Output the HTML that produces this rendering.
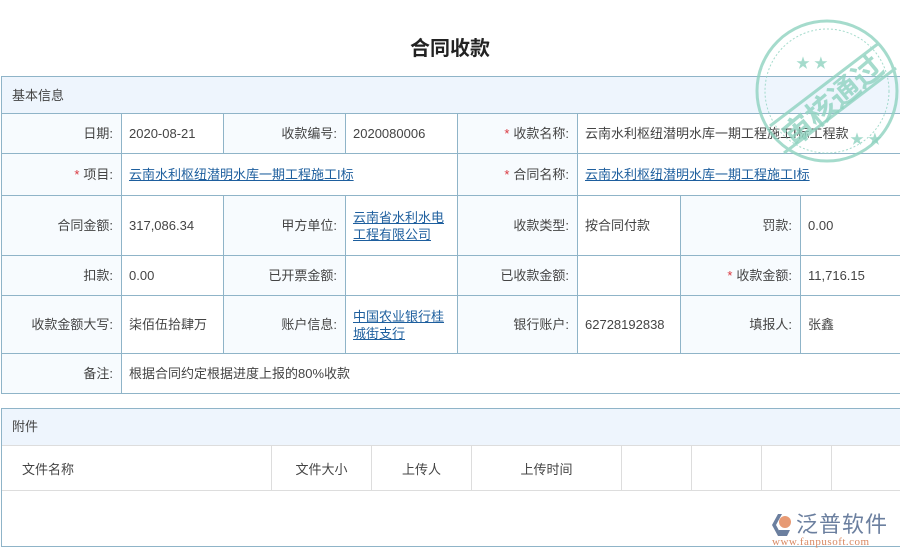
<!DOCTYPE html>
<html><head><meta charset="utf-8"><style>
*{margin:0;padding:0;box-sizing:border-box}
body{width:900px;height:557px;background:#fff;font-family:"Liberation Sans","Noto Sans CJK SC",sans-serif;font-size:13px;color:#444;position:relative;overflow:hidden}
.a{position:absolute}
.title{left:0;width:900px;top:32px;text-align:center;font-size:20px;font-weight:bold;color:#222}
.c{position:absolute;border-right:1px solid #8fb4c8;border-bottom:1px solid #8fb4c8;display:flex;align-items:center;line-height:17px}
.l{background:#f7fbfe;justify-content:flex-end;padding-right:8px}
.v{padding-left:7px;background:#fff}
.lk{color:#1e5f9e;text-decoration:underline}
.s{color:#d9363e;margin-right:4px}
.h{background:#eef5fd}
.g{position:absolute;border-right:1px solid #ddd;display:flex;align-items:center;justify-content:center;top:446px;height:44px}
</style></head><body>
<div class="a title">合同收款</div>
<div class="a" style="left:1px;top:76px;width:900px;height:318px;border:1px solid #8fb4c8;border-right:none"></div>
<div class="c h" style="left:2px;top:77px;width:898px;height:37px;padding-left:10px;border-right:none">基本信息</div>

<div class="c l" style="left:2px;top:114px;width:120px;height:40px">日期:</div>
<div class="c v" style="left:122px;top:114px;width:102px;height:40px">2020-08-21</div>
<div class="c l" style="left:224px;top:114px;width:122px;height:40px">收款编号:</div>
<div class="c v" style="left:346px;top:114px;width:112px;height:40px">2020080006</div>
<div class="c l" style="left:458px;top:114px;width:120px;height:40px"><span class="s">*</span>收款名称:</div>
<div class="c v" style="left:578px;top:114px;width:322px;height:40px;border-right:none">云南水利枢纽潜明水库一期工程施工I标工程款</div>

<div class="c l" style="left:2px;top:154px;width:120px;height:42px"><span class="s">*</span>项目:</div>
<div class="c v" style="left:122px;top:154px;width:336px;height:42px"><span class="lk">云南水利枢纽潜明水库一期工程施工I标</span></div>
<div class="c l" style="left:458px;top:154px;width:120px;height:42px"><span class="s">*</span>合同名称:</div>
<div class="c v" style="left:578px;top:154px;width:322px;height:42px;border-right:none"><span class="lk">云南水利枢纽潜明水库一期工程施工I标</span></div>

<div class="c l" style="left:2px;top:196px;width:120px;height:60px">合同金额:</div>
<div class="c v" style="left:122px;top:196px;width:102px;height:60px">317,086.34</div>
<div class="c l" style="left:224px;top:196px;width:122px;height:60px">甲方单位:</div>
<div class="c v" style="left:346px;top:196px;width:112px;height:60px"><span class="lk">云南省水利水电<br>工程有限公司</span></div>
<div class="c l" style="left:458px;top:196px;width:120px;height:60px">收款类型:</div>
<div class="c v" style="left:578px;top:196px;width:103px;height:60px">按合同付款</div>
<div class="c l" style="left:681px;top:196px;width:120px;height:60px">罚款:</div>
<div class="c v" style="left:801px;top:196px;width:99px;height:60px;border-right:none">0.00</div>

<div class="c l" style="left:2px;top:256px;width:120px;height:40px">扣款:</div>
<div class="c v" style="left:122px;top:256px;width:102px;height:40px">0.00</div>
<div class="c l" style="left:224px;top:256px;width:122px;height:40px">已开票金额:</div>
<div class="c v" style="left:346px;top:256px;width:112px;height:40px"></div>
<div class="c l" style="left:458px;top:256px;width:120px;height:40px">已收款金额:</div>
<div class="c v" style="left:578px;top:256px;width:103px;height:40px"></div>
<div class="c l" style="left:681px;top:256px;width:120px;height:40px"><span class="s">*</span>收款金额:</div>
<div class="c v" style="left:801px;top:256px;width:99px;height:40px;border-right:none">11,716.15</div>

<div class="c l" style="left:2px;top:296px;width:120px;height:58px">收款金额大写:</div>
<div class="c v" style="left:122px;top:296px;width:102px;height:58px">柒佰伍拾肆万</div>
<div class="c l" style="left:224px;top:296px;width:122px;height:58px">账户信息:</div>
<div class="c v" style="left:346px;top:296px;width:112px;height:58px"><span class="lk">中国农业银行桂<br>城街支行</span></div>
<div class="c l" style="left:458px;top:296px;width:120px;height:58px">银行账户:</div>
<div class="c v" style="left:578px;top:296px;width:103px;height:58px">62728192838</div>
<div class="c l" style="left:681px;top:296px;width:120px;height:58px">填报人:</div>
<div class="c v" style="left:801px;top:296px;width:99px;height:58px;border-right:none">张鑫</div>

<div class="c l" style="left:2px;top:354px;width:120px;height:39px;border-bottom:none">备注:</div>
<div class="c v" style="left:122px;top:354px;width:778px;height:39px;border-right:none;border-bottom:none">根据合同约定根据进度上报的80%收款</div>

<div class="a" style="left:1px;top:408px;width:900px;height:139px;border:1px solid #8fb4c8;border-right:none"></div>
<div class="a h" style="left:2px;top:409px;width:898px;height:37px;padding-left:10px;line-height:36px;border-bottom:1px solid #ddd">附件</div>
<div class="g" style="left:2px;width:270px;justify-content:flex-start;padding-left:20px">文件名称</div>
<div class="g" style="left:272px;width:100px">文件大小</div>
<div class="g" style="left:372px;width:100px">上传人</div>
<div class="g" style="left:472px;width:150px">上传时间</div>
<div class="g" style="left:622px;width:70px"></div>
<div class="g" style="left:692px;width:70px"></div>
<div class="g" style="left:762px;width:70px"></div>
<div class="a" style="left:2px;top:490px;width:898px;border-top:1px solid #ddd"></div>

<svg class="a" style="left:754px;top:18px" width="146" height="146" viewBox="0 0 146 146">
<g fill="none" stroke="#8fd3c0" stroke-width="3" opacity="0.8">
<circle cx="73" cy="73" r="70"/><circle cx="73" cy="73" r="62" stroke-width="1" stroke-dasharray="2 2"/>
<line x1="16" y1="108" x2="125" y2="25"/><line x1="30" y1="135" x2="142" y2="50"/>
</g>
<g fill="#8fd3c0" opacity="0.8"><text x="78" y="94" font-size="30" font-weight="bold" transform="rotate(-40 78 82)" text-anchor="middle" font-family="Noto Sans CJK SC,sans-serif">审核通过</text>
<text x="42" y="50" font-size="14">★ ★</text><text x="96" y="126" font-size="14">★ ★</text></g>
</svg>

<svg class="a" style="left:770px;top:512px" width="22" height="26" viewBox="0 0 22 26"><path d="M8 2 L2 13 L8 24 L12 24 L6 13 L12 2Z" fill="#6b7f9f"/><circle cx="15" cy="10" r="6" fill="#e79a74"/><path d="M9 18 L20 18 L17 24 L9 24Z" fill="#6b7f9f"/></svg>
<div class="a" style="left:796px;top:510px;font-size:22px;color:#6b7f9f;font-family:'Noto Sans CJK SC',sans-serif;letter-spacing:1px;line-height:26px">泛普软件</div>
<div class="a" style="left:772px;top:536px;font-size:11px;color:#d98862;font-family:'Liberation Serif',serif;letter-spacing:0.5px">www.fanpusoft.com</div>
</body></html>
